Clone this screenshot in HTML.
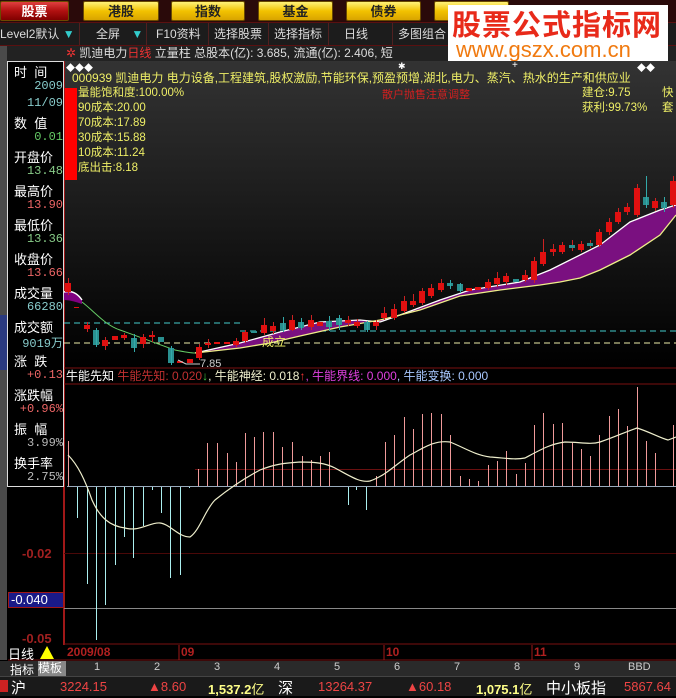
<!DOCTYPE html>
<html><head><meta charset="utf-8"><style>
*{margin:0;padding:0;box-sizing:border-box}
body{width:676px;height:696px;overflow:hidden;background:#000;font-family:"Liberation Sans","Noto Sans CJK SC",sans-serif;position:relative;color:#fff}
.a{position:absolute;white-space:nowrap}
.btn{position:absolute;top:1px;height:20px;background:linear-gradient(#fff27a,#f2c200 50%,#d9a400);border:1px solid #6a4a00;color:#222;font-size:13px;font-weight:bold;text-align:center;line-height:19px;border-radius:2px}
.tb{position:absolute;top:23px;height:22px;font-size:12px;color:#ddd;line-height:22px;border-right:1px solid #502020}
.lbl{position:absolute;left:14px;font-size:13px;color:#fff}
.val{position:absolute;right:613px;font-size:12px;text-align:right;font-family:"Liberation Mono",monospace}
.tab{position:absolute;top:661px;font-size:11px;color:#ccc}
</style></head><body>
<div class="a" style="left:0;top:0;width:676px;height:22px;background:#2a0a0a"></div>
<div class="btn" style="left:0;width:69px;background:linear-gradient(#e04040,#b01010 50%,#800000);color:#fff">股票</div>
<div class="btn" style="left:83px;width:76px">港股</div>
<div class="btn" style="left:171px;width:74px">指数</div>
<div class="btn" style="left:258px;width:75px">基金</div>
<div class="btn" style="left:346px;width:75px">债券</div>
<div class="btn" style="left:434px;width:75px"></div>
<div class="a" style="left:0;top:22px;width:676px;height:24px;background:#1c1c1c;border-top:1px solid #5a1010;border-bottom:1px solid #5a1010"></div>
<div class="tb" style="left:0;width:80px">Level2默认 <span style="color:#3cc">▼</span></div>
<div class="tb" style="left:80px;width:67px;padding-left:16px">全屏 <span style="color:#3cc;margin-left:8px">▼</span></div>
<div class="tb" style="left:147px;width:62px;padding-left:9px">F10资料</div>
<div class="tb" style="left:209px;width:60px;padding-left:5px">选择股票</div>
<div class="tb" style="left:269px;width:60px;padding-left:5px">选择指标</div>
<div class="tb" style="left:329px;width:64px;padding-left:15px">日线 <span style="color:#3cc;margin-left:10px">▼</span></div>
<div class="tb" style="left:393px;width:60px;padding-left:5px">多图组合</div>
<div class="a" style="left:0;top:46px;width:676px;height:15px;background:#222"></div>
<div class="a" style="left:66px;top:46px;font-size:12px;color:#ddd;line-height:15px"><span style="color:#e33">✲</span> 凯迪电力<span style="color:#e33">日线</span> 立量柱 总股本(亿): 3.685, 流通(亿): 2.406, 短</div>
<div class="a" style="left:448px;top:5px;width:220px;height:57px;background:#fff"></div>
<div class="a" style="left:452px;top:5px;font-size:29px;font-weight:bold;color:#e82a1a;letter-spacing:1px;font-family:'Noto Sans CJK SC',sans-serif;line-height:36px">股票公式指标网</div>
<div class="a" style="left:456px;top:38px;font-size:22px;color:#f07a10;line-height:24px;font-family:'Liberation Sans',sans-serif">www.gszx.com.cn</div>
<div class="a" style="left:0;top:46px;width:7px;height:614px;background:#4a4a4a"></div>
<div class="a" style="left:0;top:315px;width:7px;height:55px;background:#2a3a80"></div>
<svg class="a" style="left:0;top:0" width="676" height="696">
<defs><linearGradient id="g" x1="0" y1="0" x2="0" y2="1"><stop offset="0" stop-color="#333"/><stop offset="1" stop-color="#000"/></linearGradient></defs>
<rect x="64" y="61" width="612" height="307" fill="url(#g)"/>
<rect x="64" y="88" width="13" height="92" fill="#f00"/>
<line x1="64" y1="61" x2="64" y2="645" stroke="#a01818" stroke-width="2"/>
<line x1="64" y1="368" x2="676" y2="368" stroke="#7a1010"/>
<line x1="64" y1="384" x2="676" y2="384" stroke="#7a1010"/>
<line x1="64" y1="644" x2="676" y2="644" stroke="#7a1010"/>
<line x1="8" y1="660" x2="676" y2="660" stroke="#7a1010"/>
<line x1="64" y1="323" x2="240" y2="323" stroke="#4cc" stroke-dasharray="6,4"/>
<line x1="240" y1="331" x2="676" y2="331" stroke="#4cc" stroke-dasharray="6,4"/>
<line x1="64" y1="343" x2="676" y2="343" stroke="#eea" stroke-dasharray="6,4"/>
<path d="M64,292 C72,290 78,294 82,300 L82,304 C76,302 70,300 64,300 Z" fill="#800080"/>
<path d="M195,353 L240,343 280,332 320,322 360,320 380,322 400,315 440,300 470,290 520,282 550,270 600,245 630,222 660,210 676,205 L676,215 660,235 630,255 600,270 580,278 560,282 540,285 500,290 460,296 420,310 380,320 340,327 300,336 270,343 240,348 200,353 Z" fill="#7a1080"/>
<path d="M64,292 C72,290 78,294 82,300" fill="none" stroke="#fff" stroke-width="1.5"/>
<path d="M195,353 L240,343 280,332 320,322 360,320 380,322 400,315 440,300 470,290 520,282 550,270 600,245 630,222 660,210 676,205" fill="none" stroke="#fff" stroke-width="1.3"/>
<path d="M195,353 L240,348 270,343 300,336 340,327 380,320 420,310 460,296 500,290 540,285 560,282 580,278 600,270 630,255 660,235 676,215" fill="none" stroke="#ee8" stroke-width="1.3"/>
<path d="M82,302 C95,312 105,325 120,330 C140,337 160,345 175,350 C185,352 190,353 195,353" fill="none" stroke="#6c6"/>
<g transform="translate(0.5,0)">
<path d="M68,278V295M96,328V347M105,337V350M124,333V340M134,334V352M143,334V348M152,331V342M171,346V365M199,344V360M208,339V348M236,338V347M245,330V343M264,318V335M273,322V334M283,317V332M292,315V331M301,318V330M311,315V330M329,316V331M339,315V330M348,316V326M357,319V328M367,321V332M376,320V330M384,307V320M394,304V320M404,296V313M413,294V307M422,288V305M431,284V298M441,279V292M450,280V289M460,283V293M488,279V290M497,272V287M506,273V285M525,270V282M534,257V283M543,239V266M553,244V256M562,242V254M572,240V251M581,241V252M590,240V248M599,229V247M609,218V235M618,208V224M627,203V215M637,184V217M646,176V208M655,198V211M664,197V212M673,176V208M87,322V332" stroke="#c22"/>
</g>
<g fill="#e01010">
<rect x="65" y="283" width="6" height="9"/><rect x="74" y="307" width="5" height="1"/><rect x="84" y="325" width="6" height="4"/><rect x="102" y="340" width="6" height="6"/><rect x="112" y="336" width="6" height="4"/><rect x="121" y="335" width="6" height="3"/><rect x="140" y="337" width="6" height="7"/><rect x="149" y="335" width="6" height="2"/><rect x="177" y="361" width="6" height="2"/><rect x="187" y="359" width="6" height="4"/><rect x="196" y="347" width="6" height="11"/><rect x="205" y="343" width="6" height="2"/><rect x="214" y="342" width="6" height="2"/><rect x="224" y="342" width="6" height="2"/><rect x="233" y="341" width="6" height="4"/><rect x="242" y="332" width="6" height="9"/><rect x="261" y="325" width="6" height="8"/><rect x="270" y="326" width="6" height="5"/><rect x="289" y="320" width="6" height="10"/><rect x="308" y="320" width="6" height="7"/><rect x="317" y="322" width="6" height="4"/><rect x="345" y="320" width="6" height="3"/><rect x="354" y="322" width="6" height="4"/><rect x="373" y="322" width="6" height="4"/><rect x="381" y="313" width="6" height="5"/><rect x="391" y="309" width="6" height="9"/><rect x="401" y="301" width="6" height="10"/><rect x="410" y="301" width="6" height="4"/><rect x="419" y="291" width="6" height="12"/><rect x="428" y="288" width="6" height="8"/><rect x="438" y="283" width="6" height="7"/><rect x="466" y="288" width="6" height="3"/><rect x="475" y="287" width="6" height="3"/><rect x="485" y="282" width="6" height="6"/><rect x="494" y="278" width="6" height="6"/><rect x="503" y="276" width="6" height="6"/><rect x="522" y="275" width="6" height="5"/><rect x="531" y="261" width="6" height="19"/><rect x="540" y="252" width="6" height="12"/><rect x="550" y="249" width="6" height="3"/><rect x="559" y="245" width="6" height="7"/><rect x="578" y="244" width="6" height="6"/><rect x="596" y="232" width="6" height="13"/><rect x="606" y="222" width="6" height="10"/><rect x="615" y="212" width="6" height="10"/><rect x="624" y="207" width="6" height="5"/><rect x="634" y="188" width="6" height="27"/><rect x="652" y="201" width="6" height="7"/><rect x="670" y="181" width="6" height="24"/>
</g>
<g fill="#2a9090">
<rect x="93" y="330" width="6" height="15"/><rect x="131" y="338" width="6" height="10"/><rect x="158" y="337" width="6" height="5"/><rect x="168" y="348" width="6" height="15"/><rect x="251" y="331" width="6" height="2"/><rect x="280" y="323" width="6" height="7"/><rect x="298" y="322" width="6" height="6"/><rect x="326" y="321" width="6" height="6"/><rect x="336" y="318" width="6" height="7"/><rect x="364" y="322" width="6" height="8"/><rect x="447" y="283" width="6" height="3"/><rect x="457" y="284" width="6" height="7"/><rect x="513" y="279" width="6" height="3"/><rect x="569" y="245" width="6" height="3"/><rect x="587" y="243" width="6" height="3"/><rect x="643" y="197" width="6" height="8"/><rect x="661" y="202" width="6" height="6"/>
</g>
<g transform="translate(0.5,0)"><path d="M96,328V347M134,334V352M171,346V365M283,317V332M301,318V330M329,316V331M339,315V330M367,321V332M450,280V289M460,283V293M646,176V208M664,197V212" stroke="#3aa"/></g>
<text x="262" y="346" fill="#ee6" font-size="12" font-family="Noto Sans CJK SC">成立</text>
<path d="M178,360 L186,364 L200,364" stroke="#ccc" fill="none"/>
<text x="200" y="367" fill="#ccc" font-size="11">7.85</text>
<line x1="195" y1="469.5" x2="676" y2="469.5" stroke="#6a1010"/>
<line x1="64" y1="553.5" x2="676" y2="553.5" stroke="#4a0808"/>
<line x1="64" y1="608.5" x2="676" y2="608.5" stroke="#888"/>
<g transform="translate(0.5,0)">
<path d="M68,486V441M198,486V469M207,486V443M217,486V443M227,486V453M236,486V462M245,486V433M254,486V437M263,486V432M273,486V432M282,486V447M292,486V442M302,486V456M311,486V460M320,486V456M329,486V452M376,486V476M385,486V442M394,486V435M404,486V417M413,486V429M422,486V414M431,486V413M441,486V414M450,486V435M460,486V476M469,486V479M478,486V481M488,486V465M497,486V461M506,486V451M516,486V474M525,486V463M534,486V425M543,486V413M553,486V424M562,486V423M572,486V443M581,486V449M590,486V456M599,486V435M609,486V416M618,486V409M627,486V426M637,486V387M646,486V441M655,486V453M673,486V425" stroke="#f09a9a"/>
<path d="M77,486V518M87,486V584M96,486V640M105,486V605M115,486V565M124,486V537M133,486V558M143,486V526M152,486V490M161,486V513M170,486V578M180,486V575M189,486V488M348,486V505M356,486V490M366,486V510" stroke="#aee"/>
</g>
<line x1="67" y1="486.5" x2="676" y2="486.5" stroke="#9ab"/>
<path d="M68,455 C78,465 85,480 92,500 C100,518 110,526 125,528 C140,532 150,522 160,523 C170,524 178,537 190,537 C200,530 205,510 215,500 C230,488 245,478 260,470 C275,464 285,463 300,462 C315,462 325,463 335,468 C350,476 360,483 370,481 C385,476 395,465 410,455 C425,447 435,440 450,442 C465,448 475,455 490,457 C505,458 515,460 525,458 C540,450 550,444 565,442 C580,442 590,445 600,442 C615,437 625,432 637,428 C650,432 660,438 668,440 L676,437" fill="none" stroke="#eec" stroke-width="1.2"/>
<line x1="179" y1="645" x2="179" y2="660" stroke="#a01818"/>
<line x1="384" y1="645" x2="384" y2="660" stroke="#a01818"/>
<line x1="532" y1="645" x2="532" y2="660" stroke="#a01818"/>
<polygon points="40,659 47,646 54,659" fill="#ff0"/>
</svg>
<div class="a" style="left:7px;top:61px;width:57px;height:426px;border:1px solid #ddd;background:#000"></div>
<div class="lbl" style="top:62px">时&nbsp;&nbsp;间</div>
<div class="val" style="top:79px;color:#8cc">2009</div>
<div class="val" style="top:96px;color:#8cc">11/09</div>
<div class="lbl" style="top:113px">数&nbsp;&nbsp;值</div>
<div class="val" style="top:130px;color:#6c6">0.01</div>
<div class="lbl" style="top:147px">开盘价</div>
<div class="val" style="top:164px;color:#8c8">13.48</div>
<div class="lbl" style="top:181px">最高价</div>
<div class="val" style="top:198px;color:#e66">13.90</div>
<div class="lbl" style="top:215px">最低价</div>
<div class="val" style="top:232px;color:#8c8">13.36</div>
<div class="lbl" style="top:249px">收盘价</div>
<div class="val" style="top:266px;color:#e66">13.66</div>
<div class="lbl" style="top:283px">成交量</div>
<div class="val" style="top:300px;color:#8cc">66280</div>
<div class="lbl" style="top:317px">成交额</div>
<div class="val" style="top:334px;color:#8cc">9019万</div>
<div class="lbl" style="top:351px">涨&nbsp;&nbsp;跌</div>
<div class="val" style="top:368px;color:#e66">+0.13</div>
<div class="lbl" style="top:385px">涨跌幅</div>
<div class="val" style="top:402px;color:#e66">+0.96%</div>
<div class="lbl" style="top:419px">振&nbsp;&nbsp;幅</div>
<div class="val" style="top:436px;color:#bbb">3.99%</div>
<div class="lbl" style="top:453px">换手率</div>
<div class="val" style="top:470px;color:#bbb">2.75%</div>
<div class="a" style="left:22px;top:546px;font-size:13px;color:#a02020;font-weight:bold">-0.02</div>
<div class="a" style="left:8px;top:592px;width:56px;height:16px;background:#1a1a88;border:1px solid #a01818;font-size:13px;color:#fff;line-height:14px;padding-left:2px">-0.040</div>
<div class="a" style="left:22px;top:631px;font-size:13px;color:#a02020;font-weight:bold">-0.05</div>
<div class="a" style="left:66px;top:61px;font-size:9px;color:#fff">◆◆◆</div>
<div class="a" style="left:398px;top:61px;font-size:9px;color:#fff">✱</div>
<div class="a" style="left:512px;top:60px;font-size:10px;color:#fff">+</div>
<div class="a" style="left:637px;top:61px;font-size:9px;color:#fff">◆◆</div>
<div class="a" style="left:72px;top:69px;font-size:12px;color:#ee6">000939 凯迪电力 电力设备,工程建筑,股权激励,节能环保,预盈预增,湖北,电力、蒸汽、热水的生产和供应业</div>
<div class="a" style="left:78px;top:86px;font-size:11.5px;color:#ee6;line-height:15px">量能饱和度:100.00%<br>90成本:20.00<br>70成本:17.89<br>30成本:15.88<br>10成本:11.24<br>底出击:8.18</div>
<div class="a" style="left:382px;top:86px;font-size:11px;color:#d02020">散户抛售注意调整</div>
<div class="a" style="left:582px;top:86px;font-size:11.5px;color:#ee6;line-height:15px">建仓:9.75<br>获利:99.73%</div>
<div class="a" style="left:662px;top:86px;font-size:11.5px;color:#ee6;line-height:15px">快<br>套</div>
<div class="a" style="left:66px;top:369px;font-size:12px;line-height:15px"><span style="color:#fff">牛能先知</span> <span style="color:#c03030">牛能先知: 0.020</span><span style="color:#4c4">↓</span><span style="color:#eec">, 牛能神经: 0.018</span><span style="color:#e33">↑</span><span style="color:#e040e0">, 牛能界线: 0.000</span><span style="color:#a8c8ff">, 牛能变换: 0.000</span></div>
<div class="a" style="left:8px;top:644px;font-size:13px;color:#fff">日线</div>
<div class="a" style="left:67px;top:645px;font-size:12px;color:#b02020;font-weight:bold">2009/08</div>
<div class="a" style="left:181px;top:645px;font-size:12px;color:#b02020;font-weight:bold">09</div>
<div class="a" style="left:386px;top:645px;font-size:12px;color:#b02020;font-weight:bold">10</div>
<div class="a" style="left:534px;top:645px;font-size:12px;color:#b02020;font-weight:bold">11</div>
<div class="a" style="left:0;top:661px;width:676px;height:15px;background:#2a2a2a"></div>
<div class="tab" style="left:10px;color:#fff;font-size:12px">指标</div>
<div class="a" style="left:38px;top:661px;width:28px;height:15px;background:#888;color:#fff;font-size:12px;line-height:15px">模板</div>
<div class="tab" style="left:94px">1</div><div class="tab" style="left:154px">2</div><div class="tab" style="left:214px">3</div><div class="tab" style="left:274px">4</div><div class="tab" style="left:334px">5</div><div class="tab" style="left:394px">6</div><div class="tab" style="left:454px">7</div><div class="tab" style="left:514px">8</div><div class="tab" style="left:574px">9</div><div class="tab" style="left:628px">BBD</div>
<div class="a" style="left:0;top:676px;width:676px;height:20px;background:#1a1a1a;border-top:1px solid #444"></div>
<div class="a" style="left:0;top:680px;width:8px;height:12px;background:#c22"></div>
<div class="a" style="left:11px;top:677px;font-size:15px;color:#fff">沪</div>
<div class="a" style="left:60px;top:679px;font-size:13px;color:#e44">3224.15</div>
<div class="a" style="left:148px;top:679px;font-size:13px;color:#e44">▲8.60</div>
<div class="a" style="left:208px;top:679px;font-size:13px;color:#ff8;font-weight:bold">1,537.2<span style="font-weight:normal">亿</span></div>
<div class="a" style="left:278px;top:677px;font-size:15px;color:#fff">深</div>
<div class="a" style="left:318px;top:679px;font-size:13px;color:#e44">13264.37</div>
<div class="a" style="left:406px;top:679px;font-size:13px;color:#e44">▲60.18</div>
<div class="a" style="left:476px;top:679px;font-size:13px;color:#ff8;font-weight:bold">1,075.1<span style="font-weight:normal">亿</span></div>
<div class="a" style="left:546px;top:677px;font-size:15px;color:#fff">中小板指</div>
<div class="a" style="left:624px;top:679px;font-size:13px;color:#e44">5867.64</div>
</body></html>
